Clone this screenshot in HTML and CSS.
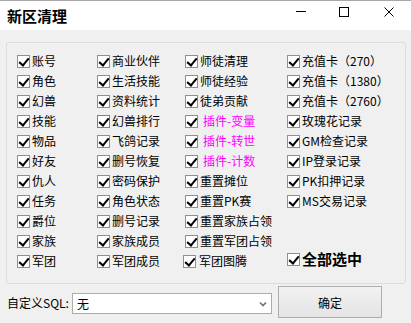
FILE: index.html
```
<!DOCTYPE html>
<html lang="zh-CN">
<head>
    <meta charset="UTF-8">
    <meta name="viewport" content="width=device-width, initial-scale=1.0">
    <title>新区清理</title>
    <link rel="stylesheet" href="styles.css">
</head>
<body>
    <div class="window">
        <div class="titlebar">
            <div class="title">新区清理</div>
            <div class="controls">
                <svg width="10" height="10" viewBox="0 0 10 10"><path d="M0 4.5h10" stroke="#000"/></svg>
                <svg width="10" height="10" viewBox="0 0 10 10"><rect x="0.5" y="0.5" width="9" height="9" fill="none" stroke="#000"/></svg>
                <svg width="10" height="10" viewBox="0 0 10 10"><path d="M0.5 0.5l9 9M9.5 0.5l-9 9" stroke="#000"/></svg>
            </div>
        </div>

        <div class="group">
            <div class="column">
                <label class="item"><span class="box"></span>账号</label>
                <label class="item"><span class="box"></span>角色</label>
                <label class="item"><span class="box"></span>幻兽</label>
                <label class="item"><span class="box"></span>技能</label>
                <label class="item"><span class="box"></span>物品</label>
                <label class="item"><span class="box"></span>好友</label>
                <label class="item"><span class="box"></span>仇人</label>
                <label class="item"><span class="box"></span>任务</label>
                <label class="item"><span class="box"></span>爵位</label>
                <label class="item"><span class="box"></span>家族</label>
                <label class="item"><span class="box"></span>军团</label>
            </div>
            <div class="column">
                <label class="item"><span class="box"></span>商业伙伴</label>
                <label class="item"><span class="box"></span>生活技能</label>
                <label class="item"><span class="box"></span>资料统计</label>
                <label class="item"><span class="box focus"></span>幻兽排行</label>
                <label class="item"><span class="box"></span>飞鸽记录</label>
                <label class="item"><span class="box"></span>删号恢复</label>
                <label class="item"><span class="box"></span>密码保护</label>
                <label class="item"><span class="box"></span>角色状态</label>
                <label class="item"><span class="box"></span>删号记录</label>
                <label class="item"><span class="box"></span>家族成员</label>
                <label class="item"><span class="box"></span>军团成员</label>
            </div>
            <div class="column">
                <label class="item"><span class="box"></span>师徒清理</label>
                <label class="item"><span class="box"></span>师徒经验</label>
                <label class="item"><span class="box"></span>徒弟贡献</label>
                <label class="item plugin"><span class="box"></span>插件-变量</label>
                <label class="item plugin"><span class="box"></span>插件-转世</label>
                <label class="item plugin"><span class="box"></span>插件-计数</label>
                <label class="item"><span class="box"></span>重置摊位</label>
                <label class="item"><span class="box"></span>重置PK赛</label>
                <label class="item"><span class="box"></span>重置家族占领</label>
                <label class="item"><span class="box"></span>重置军团占领</label>
                <label class="item shifted"><span class="box"></span>军团图腾</label>
            </div>
            <div class="column">
                <label class="item"><span class="box"></span>充值卡（270）</label>
                <label class="item"><span class="box"></span>充值卡（1380）</label>
                <label class="item"><span class="box"></span>充值卡（2760）</label>
                <label class="item"><span class="box"></span>玫瑰花记录</label>
                <label class="item"><span class="box"></span>GM检查记录</label>
                <label class="item"><span class="box"></span>IP登录记录</label>
                <label class="item"><span class="box"></span>PK扣押记录</label>
                <label class="item"><span class="box"></span>MS交易记录</label>
                <div class="spacer"></div>
                <label class="item select-all"><span class="box"></span>全部选中</label>
            </div>
        </div>

        <div class="footer">
            <span class="sql-label">自定义SQL:</span>
            <div class="combo">
                <span>无</span>
                <svg width="8" height="6" viewBox="0 0 8 6"><path d="M1 1.5l3 3 3-3" fill="none" stroke="#707070" stroke-width="1.6"/></svg>
            </div>
            <button class="ok">确定</button>
        </div>
    </div>
</body>
</html>
```
FILE: styles.css
```
* {
    box-sizing: border-box;
}

body {
    margin: 0;
    background-color: #f0f0f0;
    font-family: 'Noto Sans CJK SC', 'Noto Sans', sans-serif;
    font-size: 12px;
    color: #000;
}

.window {
    width: 411px;
    height: 323px;
    overflow: hidden;
}

.titlebar {
    display: flex;
    justify-content: space-between;
    height: 30px;
    background-color: #fff;
    border-top: 1px solid #a8a8a8;
}

.title {
    padding-left: 7px;
    font-size: 15px;
    font-weight: bold;
    line-height: 29px;
}

.controls {
    display: flex;
    gap: 33px;
    padding: 6px 17px 0 0;
}

.controls svg:last-child {
    margin-left: 2px;
}

.group {
    display: grid;
    grid-template-columns: 80px 88px 102px 1fr;
    width: 400px;
    height: 242px;
    margin: 12px 0 0 6px;
    padding: 8px 0 0 10px;
    border: 1px solid #dcdcdc;
    border-radius: 3px;
}

.column {
    display: flex;
    flex-direction: column;
}

.item {
    display: flex;
    align-items: center;
    gap: 2px;
    height: 20px;
    line-height: 20px;
    white-space: nowrap;
}

.box {
    position: relative;
    flex: none;
    width: 13px;
    height: 13px;
    border: 1px solid #8e8f8f;
    background-color: #fff;
}

.box::after {
    content: "";
    position: absolute;
    left: 3px;
    top: 0;
    width: 4px;
    height: 8px;
    border: solid #000;
    border-width: 0 2px 2px 0;
    transform: rotate(40deg);
}

.box.focus {
    border-color: #3c8fd8;
}

.plugin {
    gap: 5px;
    color: #ff00ff;
}

.shifted .box {
    margin-left: -2px;
    margin-right: 1px;
}

.spacer {
    height: 38px;
}

.select-all {
    font-size: 15px;
    font-weight: bold;
}

.footer {
    display: flex;
    align-items: center;
    height: 32px;
    margin-top: 2px;
    padding-left: 7px;
}

.sql-label {
    width: 65px;
}

.combo {
    display: flex;
    justify-content: space-between;
    align-items: center;
    width: 200px;
    height: 21px;
    margin-top: 3px;
    padding: 0 4px 0 4px;
    border: 1px solid #acacac;
    background-color: #fff;
}

.ok {
    width: 104px;
    height: 32px;
    margin-left: 6px;
    border: 1px solid #adadad;
    background: linear-gradient(#f2f2f2, #e4e4e4);
    font-family: inherit;
    font-size: 12px;
    color: #000;
}
```
